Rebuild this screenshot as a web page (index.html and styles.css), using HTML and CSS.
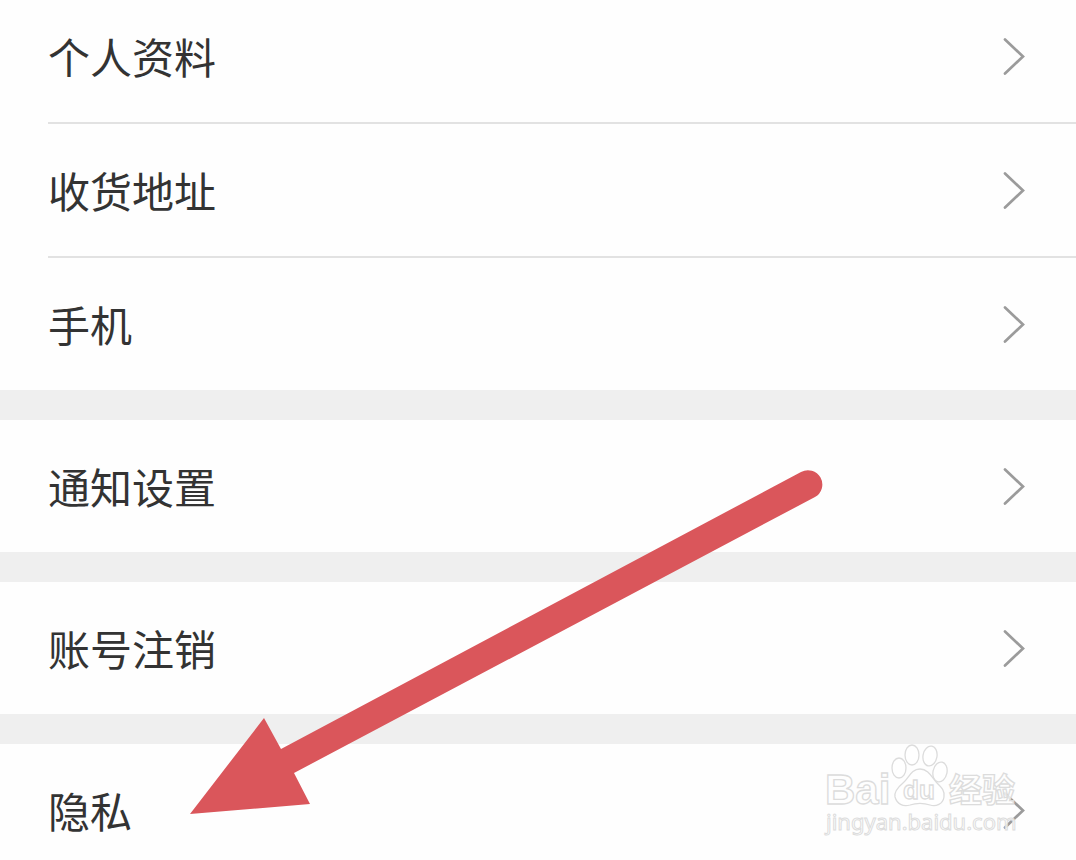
FILE: index.html
```
<!DOCTYPE html>
<html lang="zh-CN">
  <head>
    <meta charset="utf-8">
    <meta name="viewport" content="width=device-width, initial-scale=1">
    <title>设置</title>
    <link rel="stylesheet" href="styles.css">
  </head>
<body>
  <svg class="defs" width="0" height="0" aria-hidden="true">
    <symbol id="chevron" viewBox="0 0 24 40">
      <path d="M3 3.5L21 20.5L3 37.5" fill="none" stroke="#9b9b9b" stroke-width="2.7" stroke-linejoin="miter" stroke-linecap="round"/>
    </symbol>
  </svg>

  <nav class="settings">
    <div class="group">
      <a class="row" href="#profile">个人资料<svg class="chevron"><use href="#chevron"/></svg></a>
      <a class="row" href="#address">收货地址<svg class="chevron"><use href="#chevron"/></svg></a>
      <a class="row" href="#phone">手机<svg class="chevron"><use href="#chevron"/></svg></a>
    </div>
    <div class="group">
      <a class="row" href="#notice">通知设置<svg class="chevron"><use href="#chevron"/></svg></a>
    </div>
    <div class="group">
      <a class="row" href="#close">账号注销<svg class="chevron"><use href="#chevron"/></svg></a>
    </div>
    <div class="group">
      <a class="row" href="#privacy">隐私<svg class="chevron"><use href="#chevron"/></svg></a>
    </div>
  </nav>

  <!-- arrow pointing at the privacy row -->
  <svg class="arrow" viewBox="0 0 640 350" aria-hidden="true">
    <path d="M0 346L74 250L91 281L611 4A14 14 0 0 1 625 29L104 305L120 336Z" fill="#da565b"/>
  </svg>

  <svg class="watermark" viewBox="0 0 200 104" aria-label="Baidu 经验">
    <g class="outline">
      <ellipse cx="77" cy="26" rx="7" ry="10"/>
      <ellipse cx="90" cy="13" rx="7" ry="10"/>
      <ellipse cx="108" cy="14" rx="7" ry="10" transform="rotate(10 108 14)"/>
      <ellipse cx="118" cy="30" rx="7" ry="10" transform="rotate(12 118 30)"/>
      <path d="M98 27C89 27 87 36 81 41C75 46 72 50 73 55C75 62 81 65 88 63C94 61 102 61 108 63C114 65 121 62 122 55C123 49 120 46 115 41C110 36 107 27 98 27Z"/>
      <text class="latin" x="3" y="62" font-size="42">Bai</text>
      <text class="latin" x="81" y="57" font-size="26">du</text>
      <text class="han" x="127" y="60" font-size="33">经验</text>
      <text class="url" x="4" y="88" font-size="22">jingyan.baidu.com</text>
    </g>
  </svg>
</body>
</html>
```
FILE: styles.css
```
* {
  box-sizing: border-box;
}
body {
  position: relative;
  margin: 0;
  background: #fefefe;
  color: #333;
  font-family: "Noto Sans CJK SC", sans-serif;
}
.defs {
  position: absolute;
}
.group + .group {
  border-top: 30px solid #efefef;
}
.row {
  display: flex;
  align-items: center;
  justify-content: space-between;
  margin-left: 48px;
  padding: 36px 50px 36px 0;
  font-size: 42px;
  line-height: 60px;
  color: #333;
  text-decoration: none;
}
.row + .row {
  border-top: 2px solid #e2e2e2;
}
.group:first-child .row:first-child {
  padding-top: 26px;
}
.group:last-child .row {
  padding-bottom: 20px;
}
.chevron {
  flex: none;
  width: 24px;
  height: 40px;
}
.arrow {
  position: absolute;
  top: 468px;
  left: 190px;
  width: 640px;
  height: 350px;
}
.watermark {
  position: absolute;
  top: 742px;
  right: 54px;
  width: 200px;
  height: 104px;
}
.outline {
  fill: #fff;
  fill-opacity: 0.8;
  stroke: #dcdcdc;
  stroke-width: 1.3;
}
.latin {
  font-family: "Liberation Sans", sans-serif;
  font-weight: bold;
}
.han {
  font-family: "Noto Sans CJK SC", sans-serif;
  font-weight: bold;
}
.url {
  font-family: "Noto Sans", sans-serif;
  stroke-width: 1;
}
```
